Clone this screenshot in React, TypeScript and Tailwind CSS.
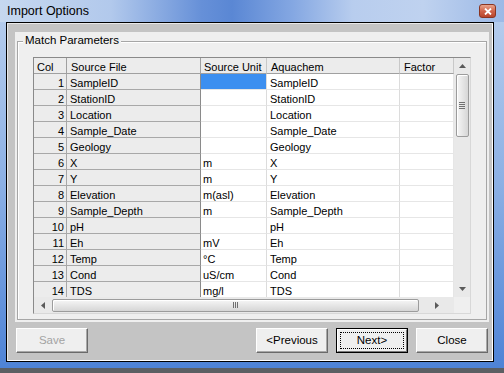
import React from "react";

const rows: [number, string, string, string][] = [
  [1, "SampleID", "", "SampleID"],
  [2, "StationID", "", "StationID"],
  [3, "Location", "", "Location"],
  [4, "Sample_Date", "", "Sample_Date"],
  [5, "Geology", "", "Geology"],
  [6, "X", "m", "X"],
  [7, "Y", "m", "Y"],
  [8, "Elevation", "m(asl)", "Elevation"],
  [9, "Sample_Depth", "m", "Sample_Depth"],
  [10, "pH", "", "pH"],
  [11, "Eh", "mV", "Eh"],
  [12, "Temp", "°C", "Temp"],
  [13, "Cond", "uS/cm", "Cond"],
  [14, "TDS", "mg/l", "TDS"],
];

function Tri({ dir }: { dir: "up" | "down" | "left" | "right" }) {
  const pts =
    dir === "up"
      ? "0,4 3.5,0 7,4"
      : dir === "down"
      ? "0,0 3.5,4 7,0"
      : dir === "left"
      ? "4,0 0,3.5 4,7"
      : "0,0 4,3.5 0,7";
  const w = dir === "up" || dir === "down" ? 7 : 4;
  const h = dir === "up" || dir === "down" ? 4 : 7;
  return (
    <svg width={w} height={h} viewBox={`0 0 ${w} ${h}`}>
      <polygon points={pts} fill="#5a5a5a" />
    </svg>
  );
}

function Button({
  label,
  disabled,
  isDefault,
}: {
  label: string;
  disabled?: boolean;
  isDefault?: boolean;
}) {
  if (isDefault) {
    return (
      <div className="w-[72px] h-[25px] border border-black flex">
        <div className="relative flex-1 bg-[#efefef] border border-t-white border-l-white border-r-[#7a7a7a] border-b-[#7a7a7a] flex items-center justify-center pt-[1px] text-[11.5px] text-black">
          <span className="absolute inset-[2px] border border-dotted border-black" />
          {label}
        </div>
      </div>
    );
  }
  return (
    <div
      className={`w-[72px] h-[25px] bg-[#efefef] border border-t-white border-l-white border-r-[#6a6a6a] border-b-[#6a6a6a] shadow-[inset_-1px_-1px_0_#a8a8a8] flex items-center justify-center pt-[1px] text-[11.5px] ${
        disabled ? "text-[#a3a3a3]" : "text-black"
      }`}
    >
      {label}
    </div>
  );
}

export default function App() {
  return (
    <div className="w-[504px] h-[373px] bg-[#5c5f63] overflow-hidden font-['Liberation_Sans',Arial,sans-serif]">
      <div className="h-[368px] flex flex-col bg-gradient-to-b from-[#b9cfee] via-[#8cb0e4] to-[#4e83d6]">
        {/* Title bar */}
        <div className="h-[22px] flex items-center pl-[7px] pr-[8px] bg-[linear-gradient(90deg,#c6d8ef_0%,#b2c9ec_22%,#6690d8_40%,#5a87d4_46%,#84a7e2_58%,#b8cdee_70%,#bfd2ef_84%,#9cb9e6_100%)]">
          <span className="flex-1 text-[12.5px] text-black leading-none">Import Options</span>
          <div className="w-[17px] h-[14px] rounded-[3px] border border-[#8a3522] bg-gradient-to-b from-[#e8a48e] via-[#d0644a] to-[#b8452c] flex items-center justify-center">
            <svg width="8" height="7" viewBox="0 0 8 7">
              <path d="M1 0.5 L7 6.5 M7 0.5 L1 6.5" stroke="#fff" strokeWidth="1.8" />
            </svg>
          </div>
        </div>
        {/* Body */}
        <div className="flex-1 flex pl-[6px] pr-[10px] pb-[6px]">
          <div className="flex-1 border border-black bg-[#c4c4c4] shadow-[inset_1px_1px_0_#e8e8e8,inset_-1px_-1px_0_#ffffff] flex flex-col pl-[8px] pr-[4px] pt-[9px]">
            {/* Panel */}
            <div className="h-[290px] bg-[#efefef] flex flex-col px-[2px] pt-[9px] pb-[2px]">
              <div className="relative flex-1 border border-[#a6a6a6] shadow-[inset_1px_1px_0_#ffffff] pl-[15px] pt-[15px]">
                <span className="absolute left-[5px] top-[-9px] px-[2px] bg-[#efefef] text-[11.5px] leading-[14px] text-black">
                  Match Parameters
                </span>
                {/* Grid */}
                <div className="w-[438px] h-[257px] border border-t-[#8a8a8a] border-l-[#8a8a8a] border-r-[#d8d8d8] border-b-[#d8d8d8] flex flex-col bg-white text-[11px] text-black">
                  <div className="h-[239px] flex overflow-hidden">
                    <div className="w-[420px] flex flex-col">
                      {/* header */}
                      <div className="grid grid-cols-[33px_134px_66px_133px_54px] h-[16px] shrink-0 bg-[#ececec]">
                        {["Col", "Source File", "Source Unit", "Aquachem", "Factor"].map((h, i) => (
                          <div
                            key={h}
                            className={`h-[16px] border-b border-r border-[#a0a0a0] pt-[3px] leading-[12px] whitespace-nowrap overflow-hidden ${
                              i === 0 ? "pl-[3px]" : i === 2 ? "pl-[3px]" : "pl-[4px]"
                            } ${i >= 2 ? "border-r-[#c8c8c8]" : ""}`}
                          >
                            {h}
                          </div>
                        ))}
                      </div>
                      {rows.map(([n, src, unit, aq]) => (
                        <div
                          key={n}
                          className="grid grid-cols-[33px_134px_66px_133px_54px] h-[16px] shrink-0"
                        >
                          <div className="h-[16px] bg-[#ececec] border-b border-r border-[#a8a8a8] text-right pr-[2px] pt-[3px] leading-[12px]">
                            {n}
                          </div>
                          <div className="h-[16px] bg-[#ececec] border-b border-r border-b-[#a8a8a8] border-r-[#8a8a8a] pl-[3px] pt-[3px] leading-[12px]">
                            {src}
                          </div>
                          <div
                            className={`h-[16px] border-b border-r border-b-[#e6e6e6] border-r-[#dcdcdc] pl-[2px] pt-[3px] leading-[12px] ${
                              n === 1 ? "bg-[#3c8ff0]" : ""
                            }`}
                          >
                            {unit}
                          </div>
                          <div className="h-[16px] border-b border-r border-b-[#e6e6e6] border-r-[#dcdcdc] pl-[3px] pt-[3px] leading-[12px]">
                            {aq}
                          </div>
                          <div className="h-[16px] border-b border-r border-b-[#e6e6e6] border-r-[#e6e6e6]" />
                        </div>
                      ))}
                    </div>
                    {/* vertical scrollbar */}
                    <div className="w-[16px] bg-[#e9e9e9] flex flex-col items-center">
                      <div className="h-[16px] w-full flex items-center justify-center">
                        <Tri dir="up" />
                      </div>
                      <div className="w-[13px] h-[63px] rounded-[2px] border border-[#9c9c9c] bg-gradient-to-r from-[#f6f6f6] to-[#d6d6d6] shadow-[inset_1px_1px_0_#ffffff] flex flex-col items-center justify-center gap-[1px]">
                        <div className="w-[6px] h-[1px] bg-[#707070]" />
                        <div className="w-[6px] h-[1px] bg-[#707070]" />
                        <div className="w-[6px] h-[1px] bg-[#707070]" />
                        <div className="w-[6px] h-[1px] bg-[#707070]" />
                      </div>
                      <div className="flex-1" />
                      <div className="h-[17px] w-full flex items-center justify-center">
                        <Tri dir="down" />
                      </div>
                    </div>
                  </div>
                  {/* horizontal scrollbar */}
                  <div className="h-[16px] flex">
                    <div className="w-[420px] bg-[#e9e9e9] flex items-center">
                      <div className="w-[17px] h-full flex items-center justify-center">
                        <Tri dir="left" />
                      </div>
                      <div className="ml-[1px] w-[367px] h-[13px] rounded-[2px] border border-[#9c9c9c] bg-gradient-to-b from-[#f6f6f6] to-[#d6d6d6] shadow-[inset_1px_1px_0_#ffffff] flex items-center justify-center gap-[1px]">
                        <div className="w-[1px] h-[6px] bg-[#707070]" />
                        <div className="w-[1px] h-[6px] bg-[#707070]" />
                        <div className="w-[1px] h-[6px] bg-[#707070]" />
                      </div>
                      <div className="flex-1 flex items-center justify-center">
                        <Tri dir="right" />
                      </div>
                    </div>
                    <div className="w-[16px] bg-[#efefef]" />
                  </div>
                </div>
              </div>
            </div>
            {/* Buttons */}
            <div className="mt-[6px] flex pl-[1px] pr-[1px]">
              <Button label="Save" disabled />
              <div className="ml-auto flex gap-[8px]">
                <Button label="<Previous" />
                <Button label="Next>" isDefault />
                <Button label="Close" />
              </div>
            </div>
          </div>
        </div>
      </div>
    </div>
  );
}
